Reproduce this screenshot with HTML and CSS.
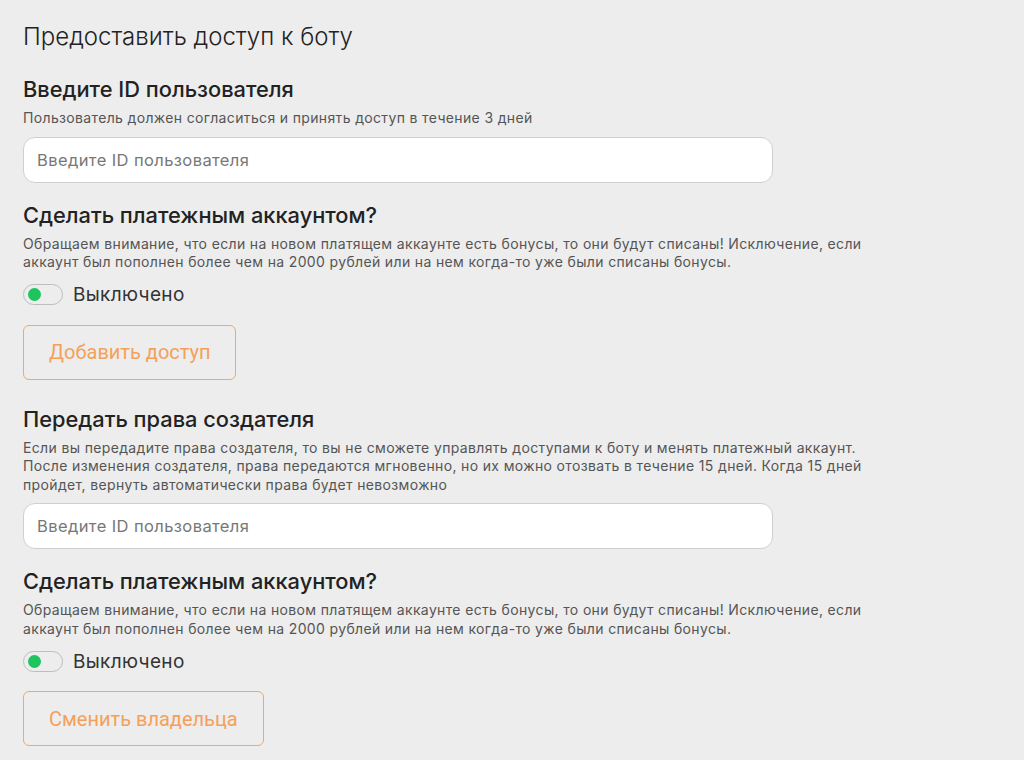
FILE: index.html
```html
<!DOCTYPE html>
<html lang="ru">
<head>
<meta charset="utf-8">
<link rel="stylesheet" href="styles.css">
</head>
<body>
<main class="page">
  <h1 class="title">Предоставить доступ к боту</h1>

  <section class="block">
    <h2 class="heading">Введите ID пользователя</h2>
    <p class="desc">Пользователь должен согласиться и принять доступ в течение 3 дней</p>
    <input class="field" type="text" placeholder="Введите ID пользователя">
  </section>

  <section class="block">
    <h2 class="heading">Сделать платежным аккаунтом?</h2>
    <p class="desc">Обращаем внимание, что если на новом платящем аккаунте есть бонусы, то они будут списаны! Исключение, если аккаунт был пополнен более чем на 2000 рублей или на нем когда-то уже были списаны бонусы.</p>
    <div class="toggle-row">
      <span class="toggle"><span class="knob"></span></span>
      <span class="toggle-label">Выключено</span>
    </div>
    <button class="btn" type="button">Добавить доступ</button>
  </section>

  <section class="block">
    <h2 class="heading">Передать права создателя</h2>
    <p class="desc">Если вы передадите права создателя, то вы не сможете управлять доступами к боту и менять платежный аккаунт. После изменения создателя, права передаются мгновенно, но их можно отозвать в течение 15 дней. Когда 15 дней пройдет, вернуть автоматически права будет невозможно</p>
    <input class="field" type="text" placeholder="Введите ID пользователя">
  </section>

  <section class="block">
    <h2 class="heading">Сделать платежным аккаунтом?</h2>
    <p class="desc">Обращаем внимание, что если на новом платящем аккаунте есть бонусы, то они будут списаны! Исключение, если аккаунт был пополнен более чем на 2000 рублей или на нем когда-то уже были списаны бонусы.</p>
    <div class="toggle-row">
      <span class="toggle"><span class="knob"></span></span>
      <span class="toggle-label">Выключено</span>
    </div>
    <button class="btn" type="button">Сменить владельца</button>
  </section>
</main>
</body>
</html>
```

FILE: styles.css
```css
html, body {
  margin: 0;
  padding: 0;
  background: #ededed;
}
body {
  font-family: Inter, "Noto Sans", sans-serif;
  color: #222;
}
.page {
  padding: 20px 23px 0;
  width: 850px;
}
.title {
  margin: 0 0 21px;
  font-size: 24px;
  font-weight: 300;
  line-height: 34px;
  color: #222;
}
.block {
  margin-bottom: 18px;
}
.block:has(.btn) {
  margin-bottom: 25px;
}
.heading {
  margin: 0;
  font-size: 21.8px;
  font-weight: 500;
  line-height: 28px;
  color: #222;
}
.desc {
  margin: 6px 0 9px;
  font-size: 14px;
  letter-spacing: 0.35px;
  line-height: 18.5px;
  color: #555;
}
.field {
  display: block;
  box-sizing: border-box;
  width: 750px;
  height: 46px;
  padding: 0 13px;
  border: 1px solid #cfcfcf;
  border-radius: 12px;
  background: #fff;
  font-family: Inter, "Noto Sans", sans-serif;
  font-size: 16.5px;
  letter-spacing: 0.4px;
  color: #222;
  outline: none;
}
.field::placeholder {
  color: #777;
}
.toggle-row {
  display: flex;
  align-items: center;
  gap: 10px;
  height: 22px;
  margin-top: 12px;
}
.toggle {
  box-sizing: border-box;
  width: 40px;
  height: 21px;
  border: 1px solid #bdbdbd;
  border-radius: 11px;
  background: #ededed;
  display: flex;
  align-items: center;
  padding-left: 4px;
}
.knob {
  width: 13px;
  height: 13px;
  border-radius: 50%;
  background: #1ec45e;
}
.toggle-label {
  font-size: 19px;
  letter-spacing: 0.35px;
  color: #333;
}
.btn {
  display: block;
  margin-top: 19px;
  height: 55px;
  padding: 0 25px;
  border: 1px solid #f5a764;
  border-radius: 6px;
  background: transparent;
  font-family: Roboto, "Liberation Sans", sans-serif;
  font-size: 20px;
  color: #f5a05a;
}
```
